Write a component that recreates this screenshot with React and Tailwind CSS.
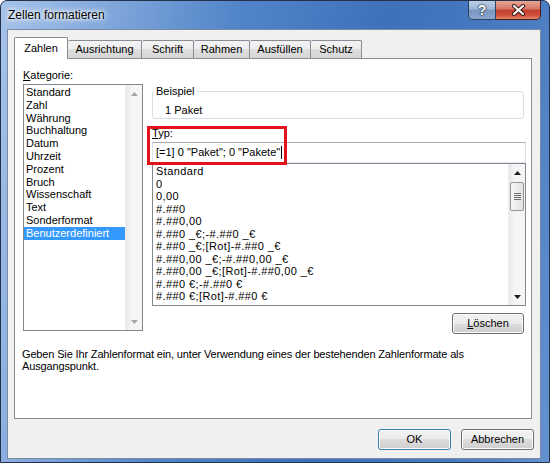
import React from "react";

const categories = [
  "Standard",
  "Zahl",
  "Währung",
  "Buchhaltung",
  "Datum",
  "Uhrzeit",
  "Prozent",
  "Bruch",
  "Wissenschaft",
  "Text",
  "Sonderformat",
  "Benutzerdefiniert",
];

const formats = [
  "Standard",
  "0",
  "0,00",
  "#.##0",
  "#.##0,00",
  "#.##0 _€;-#.##0 _€",
  "#.##0 _€;[Rot]-#.##0 _€",
  "#.##0,00 _€;-#.##0,00 _€",
  "#.##0,00 _€;[Rot]-#.##0,00 _€",
  "#.##0 €;-#.##0 €",
  "#.##0 €;[Rot]-#.##0 €",
];

const tabs = [
  { label: "Zahlen", w: "w-[54px]", active: true },
  { label: "Ausrichtung", w: "w-[74px]" },
  { label: "Schrift", w: "w-[52px]" },
  { label: "Rahmen", w: "w-[56px]" },
  { label: "Ausfüllen", w: "w-[61px]" },
  { label: "Schutz", w: "w-[51px]" },
];

const Arrow = ({ down, color }) => (
  <svg width="7" height="4" viewBox="0 0 7 4">
    <path d={down ? "M0 0L3.5 4L7 0Z" : "M0 4L3.5 0L7 4Z"} fill={color} />
  </svg>
);

const ScrollBar = ({ disabled }) => {
  const c = disabled ? "#a6a6a6" : "#1e1e1e";
  return (
    <div className="flex w-[17px] flex-col border-l border-[#ececec] bg-[linear-gradient(to_right,#e8e8e8,#f5f5f5_35%,#f5f5f5)]">
      <div className="flex h-[17px] items-center justify-center">
        <Arrow color={c} />
      </div>
      {!disabled && (
        <div className="mx-px mt-px flex h-[29px] flex-col items-center justify-center gap-px rounded-[2px] border border-[#959595] bg-[linear-gradient(to_right,#f6f6f6,#e3e3e3)]">
          <div className="h-px w-[7px] bg-[#6f6f6f]" />
          <div className="h-px w-[7px] bg-[#6f6f6f]" />
          <div className="h-px w-[7px] bg-[#6f6f6f]" />
          <div className="h-px w-[7px] bg-[#6f6f6f]" />
        </div>
      )}
      <div className="flex-1" />
      <div className="flex h-[17px] items-center justify-center">
        <Arrow down color={c} />
      </div>
    </div>
  );
};

const btn =
  "flex h-[21px] items-center justify-center rounded-[3px] border bg-[linear-gradient(#f2f2f2_0%,#ebebeb_50%,#dddddd_50%,#cfcfcf_100%)] shadow-[inset_0_0_0_1px_#fbfbfb]";

export default function App() {
  return (
    <div className="h-[466px] w-[550px] bg-white font-['Liberation_Sans',Arial,sans-serif] text-[11px] text-black">
      <div className="flex h-[463px] flex-col rounded-t-[7px] border border-[#23324a] bg-[linear-gradient(100deg,#a6c3ea_0%,#84aadd_16%,#5184c8_38%,#3f71b9_62%,#4a7cc2_85%,#6591cf_100%)] pl-[6px] pr-[8px] pb-[3px]">
        {/* title bar */}
        <div className="flex h-[28px] items-start justify-between">
          <span className="pl-px pt-[6px] text-[12px] leading-[16px] [text-shadow:0_0_8px_#fff,0_0_5px_#fff,0_0_3px_#fff]">
            Zellen formatieren
          </span>
          <div className="flex h-[19px]">
            <div className="flex w-[28px] items-center justify-center rounded-bl-[5px] border border-t-0 border-[#2c4566] bg-[linear-gradient(#bccde4_0%,#9fb6d6_45%,#7995c0_50%,#8ba7d0_100%)] text-[14px] font-bold leading-none text-white [text-shadow:0_0_1px_#1b2a40,0_0_1px_#1b2a40,0_0_2px_#1b2a40]">
              ?
            </div>
            <div className="flex w-[45px] items-center justify-center rounded-br-[5px] border border-l-0 border-t-0 border-[#4a1b16] bg-[linear-gradient(#e7a596_0%,#d67563_45%,#c3402c_50%,#d0523d_80%,#e08a6d_100%)]">
              <svg width="15" height="12" viewBox="0 0 15 12">
                <path d="M3 2L12 10M12 2L3 10" stroke="#3b1a16" strokeWidth="4.2" strokeLinecap="round" />
                <path d="M3 2L12 10M12 2L3 10" stroke="#ffffff" strokeWidth="2.2" strokeLinecap="round" />
              </svg>
            </div>
          </div>
        </div>

        {/* dialog body */}
        <div className="flex h-[430px] flex-col border border-[#7a8aa2] bg-[#f0f0f0]">
          <div className="ml-[6px] mt-[7px] flex h-[21px] items-end">
            {tabs.map((t) =>
              t.active ? (
                <div
                  key={t.label}
                  className={`relative z-10 -mb-px flex h-[22px] ${t.w} items-center justify-center rounded-t-[2px] border border-b-0 border-[#898c95] bg-white`}
                >
                  {t.label}
                </div>
              ) : (
                <div
                  key={t.label}
                  className={`flex h-[18px] ${t.w} items-center justify-center rounded-t-[2px] border border-b-0 border-l-0 border-[#898c95] bg-[linear-gradient(#f3f3f3_0%,#ececec_50%,#dedede_50%,#d6d6d6_100%)]`}
                >
                  {t.label}
                </div>
              )
            )}
          </div>

          <div className="relative ml-[6px] mr-[8px] h-[361px] border border-[#898c95] bg-white pl-[7px] pr-[5px] pt-[9px]">
            <div className="flex items-start">
              {/* Kategorie */}
              <div className="ml-px flex flex-col">
                <div className="leading-[14px]">
                  <span className="underline">K</span>ategorie:
                </div>
                <div className="mt-[2px] flex h-[247px] w-[120px] border border-[#828790] bg-white">
                  <div className="flex-1 pt-px">
                    {categories.map((c) => (
                      <div
                        key={c}
                        className={`pl-[2px] leading-[12.8px] ${
                          c === "Benutzerdefiniert" ? "bg-[#3399ff] text-white" : ""
                        }`}
                      >
                        {c}
                      </div>
                    ))}
                  </div>
                  <ScrollBar disabled />
                </div>
              </div>

              {/* right side */}
              <div className="relative ml-[9px] mt-[17px] w-[374px]">
                <fieldset className="w-[372px] rounded-[3px] border border-[#d5dfe5] pb-px pl-px">
                  <legend className="ml-0 px-[2px] leading-[13px]">Beispiel</legend>
                  <div className="ml-[11px] pt-[6px] leading-[13px]">1 Paket</div>
                </fieldset>

                <div className="mt-[7px] leading-[14px]">
                  <span className="underline">T</span>yp:
                </div>
                <div className="mt-[2px] flex h-[21px] items-center border border-[#abadb3] border-b-[#e3e9ef] border-l-[#e2e3ea] border-r-[#dbdfe6] bg-white pl-[3px]">
                  <span>[=1] 0 "Paket"; 0 "Pakete"</span>
                  <span className="ml-px h-[13px] w-px bg-black" />
                </div>
                <div className="flex h-[143px] border border-[#828790] bg-white">
                  <div className="flex-1 pl-[3px] pt-px tracking-[0.4px]">
                    {formats.map((f) => (
                      <div key={f} className="leading-[12.5px] whitespace-pre">
                        {f}
                      </div>
                    ))}
                  </div>
                  <ScrollBar />
                </div>
                <div className="mt-[7px] flex justify-end pr-[2px]">
                  <div className={`${btn} w-[72px] border-[#707070]`}>
                    <span>
                      <span className="underline">L</span>öschen
                    </span>
                  </div>
                </div>

                {/* highlight annotation */}
                <div className="absolute left-[-5px] top-[41px] z-10 h-[39px] w-[140px] border-[3px] border-[#e3131b]" />
              </div>
            </div>

            <p className="mt-[14px] leading-[12px] tracking-[-0.15px]">
              Geben Sie Ihr Zahlenformat ein, unter Verwendung eines der bestehenden Zahlenformate als
              <br />
              Ausgangspunkt.
            </p>
          </div>

          <div className="mr-[6px] mt-[10px] flex justify-end gap-[10px]">
            <div className={`${btn} w-[73px] border-[#3c7fb1] bg-[linear-gradient(#eef3f7_0%,#e5ecf2_50%,#d5dee6_50%,#c9d4de_100%)] shadow-[inset_0_0_0_1px_#9fe0f7]`}>
              OK
            </div>
            <div className={`${btn} w-[73px] border-[#707070]`}>Abbrechen</div>
          </div>
        </div>
      </div>
    </div>
  );
}
